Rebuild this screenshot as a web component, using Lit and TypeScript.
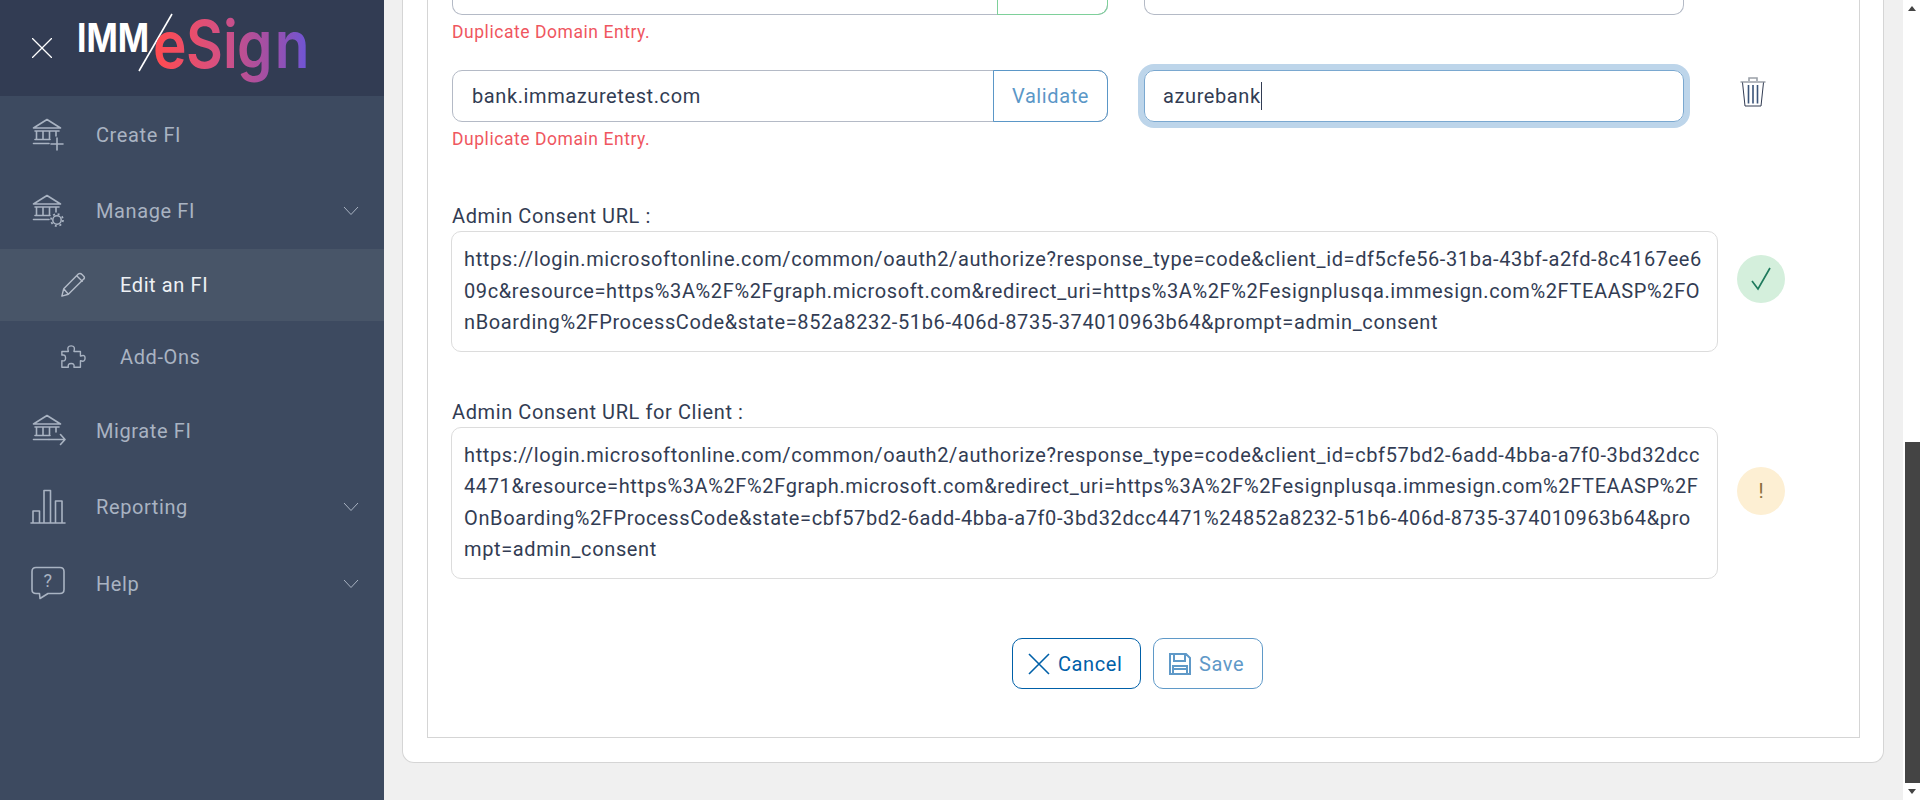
import { LitElement, html, css, svg } from "lit";
import { customElement } from "lit/decorators.js";

const bank = svg`<path d="M1.5 10 L15 1.5 L28.5 10 Z M3 13 H27 M4.5 13 V21.5 M11 13 V21.5 M17.5 13 V21.5 M24 13 V18 M3 21.5 H18 M1.5 25.5 H17" />`;

const I = {
  create: html`<svg class="ico" viewBox="0 0 34 34">${bank}<path d="M25 20 V32 M19 26 H31"/></svg>`,
  manage: html`<svg class="ico" viewBox="0 0 34 34">${bank}<circle cx="25" cy="26" r="6" stroke-width="1.7" stroke-dasharray="2 2.7" stroke-linecap="butt"/><circle cx="25" cy="26" r="4.2" stroke-width="1.5"/></svg>`,
  migrate: html`<svg class="ico" viewBox="0 0 34 34">${bank}<path d="M17 25.5 H33 M28.5 20.5 L33 25.5 L28.5 30.5"/></svg>`,
  report: html`<svg class="ico big" viewBox="0 0 36 36"><path d="M1 34 H35 M3 33.5 V22 H9.5 V33.5 M14 33.5 V1.5 H20.5 V33.5 M25.5 33.5 V12 H32 V33.5"/></svg>`,
  help: html`<svg class="ico big" viewBox="0 0 36 36"><path d="M6 1.5 H30 Q34 1.5 34 5.5 V23.5 Q34 27.5 30 27.5 H18 L10 32.5 L9.5 27.5 H6 Q2 27.5 2 23.5 V5.5 Q2 1.5 6 1.5 Z"/><text x="18" y="20.5" class="q">?</text></svg>`,
  pencil: html`<svg class="ico small" viewBox="0 0 28 28"><path d="M2 26 L4 18 L20 2 Q22 1 24 3 L26 5 Q27 7 25 8 L9 24 Z M4 18 L9 24 M18 4 L24 10"/></svg>`,
  puzzle: html`<svg class="ico small" viewBox="0 0 28 28"><path d="M2 8 H9 Q7 2 12 2 Q17 2 15 8 H22 V13 Q27 11 27 15 Q27 20 22 18 V25 H15 Q16 21 12 21 Q8 21 9 25 H2 V18 Q6 19 6 15 Q6 11 2 12 Z"/></svg>`,
};

const chev = html`<svg class="chev" viewBox="0 0 16 10"><path d="M1 1 L8 8.5 L15 1"/></svg>`;

@customElement("app-root")
export class AppRoot extends LitElement {
  static styles = css`
    :host { display: flex; width: 1920px; height: 800px; overflow: hidden; font-family: Roboto, "Liberation Sans", sans-serif; color: #323c53; background: #f0f0f0; }
    aside { width: 384px; flex: none; background: #3d4a60; display: flex; flex-direction: column; }
    .head { height: 96px; background: #323c53; display: flex; align-items: center; padding-left: 32px; box-sizing: border-box; }
    .head .x { width: 20px; height: 20px; stroke: #fff; stroke-width: 1.3; fill: none; flex: none; }
    .logo { width: 280px; height: 96px; margin-left: 25px; flex: none; }
    .imm { font: 700 40px Inter, sans-serif; fill: #fff; }
    .es { font: 600 66px Inter, sans-serif; }
    .item { display: flex; align-items: center; height: 76px; padding-left: 32px; color: #a9b3c2; font-size: 20px; letter-spacing: .6px; box-sizing: border-box; }
    .item .slot { width: 64px; flex: none; display: flex; align-items: center; }
    .item .label { flex: 1; }
    .ico { width: 34px; height: 34px; flex: none; stroke: #a9b3c2; stroke-width: 1.6; fill: none; stroke-linejoin: round; stroke-linecap: round; }
    .ico.small { width: 26px; height: 26px; stroke-width: 1.5; }
    .ico.big { width: 36px; height: 36px; margin-left: -2px; stroke-width: 1.6; }
    .q { font: 400 18px Roboto, sans-serif; fill: #a9b3c2; stroke: none; text-anchor: middle; }
    .sub { padding-left: 60px; height: 72px; }
    .sub .slot { width: 60px; }
    .active { background: #485568; color: #eef1f5; }
    .active .ico { stroke: #b4bcc9; }
    .chev { width: 16px; height: 10px; stroke: #a9b3c2; stroke-width: 1; fill: none; margin-right: 25px; flex: none; }
    .h77 { height: 77px; }
    .h78 { height: 78px; }

    main { flex: 1; min-width: 0; overflow: hidden; }
    .card { margin: -26px 19px 0 18px; height: 789px; background: #fff; border: 1px solid #d5d5d5; border-top: 0; border-radius: 0 0 12px 12px; padding: 0 23px 24px 24px; box-sizing: border-box; display: flex; }
    .box { flex: 1; border: 1px solid #d5d5d5; border-top: 0; padding: 0 0 0 24px; display: flex; flex-direction: column; min-width: 0; }
    .row { display: flex; flex: none; }
    .row.r1 { height: 40.5px; }
    .group { width: 656px; height: 52px; box-sizing: border-box; border: 1px solid #b4bac6; border-radius: 10px; display: flex; align-items: center; font-size: 20px; letter-spacing: .6px; padding-left: 19px; flex: none; }
    .group .val { flex: 1; }
    .group.clip, .plain.clip { height: 40.5px; border-top: 0; border-radius: 0 0 10px 10px; }
    .val-btn { width: 115px; height: 52px; margin: -1px -1px -1px 0; flex: none; box-sizing: border-box; border: 1px solid #5b97c7; border-radius: 0 10px 10px 0; color: #5b97c7; display: flex; align-items: center; justify-content: center; }
    .val-btn.ok { width: 111px; height: 40.5px; border-top: 0; border-color: #7ed09a; border-radius: 0 0 10px 0; margin: 0 -1px -1px 0; }
    .plain { width: 540px; height: 52px; margin-left: 36px; box-sizing: border-box; border: 1px solid #b4bac6; border-radius: 10px; flex: none; }
    .focus { border-color: #7aa8d0; box-shadow: 0 0 0 6px #bdd5ea; font-size: 20px; letter-spacing: .6px; display: flex; align-items: center; padding-left: 18px; }
    .caret { width: 1px; height: 28px; background: #323c53; }
    .err { color: #ef5660; font-size: 17.5px; letter-spacing: .55px; height: 31px; margin-top: 1.5px; display: flex; align-items: center; flex: none; }
    .r2 { margin-top: 23px; }
    .trash { width: 26px; height: 30px; margin: 7px 0 0 55.5px; fill: none; flex: none; }
    .trash .lid { stroke: #9aa0a8; stroke-width: 1.6; }
    .trash .body { stroke: #323c53; stroke-width: 1; }
    .trash .bars { stroke: #3b5478; stroke-width: 1.6; }
    .lab { font-size: 20px; letter-spacing: .6px; height: 27px; display: flex; align-items: center; margin: 47.5px 0 2px; flex: none; }
    .l2 { margin: 47px 0 1px; }
    .urlrow { display: flex; align-items: center; flex: none; margin-left: -1px; gap: 19px; }
    .url { width: 1267px; box-sizing: border-box; border: 1px solid #dcdcdc; border-radius: 10px; padding: 12px; font-size: 20px; letter-spacing: .62px; line-height: 31.5px; word-break: break-all; flex: none; }
    .circle { width: 48px; height: 48px; margin-bottom: 24px; border-radius: 50%; display: flex; align-items: center; justify-content: center; flex: none; font-size: 20px; }
    .good { background: #d4efdc; }
    .good svg { width: 20px; height: 24px; stroke: #1f7a5d; stroke-width: 1.7; fill: none; }
    .warn { background: #fdefd3; color: #8a6d3b; }
    .btns { display: flex; justify-content: center; gap: 12px; margin: 59.5px 0 0 -1px; width: 1373px; flex: none; }
    .btn { height: 51px; box-sizing: border-box; border-radius: 10px; display: flex; align-items: center; font-size: 20px; letter-spacing: .6px; padding-left: 15px; gap: 8px; }
    .btn svg { width: 22px; height: 22px; fill: none; stroke: currentColor; flex: none; }
    .cancel { width: 129px; border: 1px solid #0060a8; color: #0060a8; }
    .save { width: 110px; border: 1px solid #5f99c8; color: #5f99c8; }

    .sb { width: 17px; flex: none; background: #fff; display: flex; flex-direction: column; align-items: stretch; }
    .arrow { height: 17px; display: flex; align-items: center; justify-content: center; color: #444; flex: none; }
    .arrow.end { margin-top: auto; }
    .arrow svg { width: 8px; height: 5px; fill: #444; }
    .thumb { height: 341px; margin: 425px 0 0 2px; background: #444; flex: none; }
  `;

  render() {
    return html`
      <aside>
        <div class="head">
          <svg class="x" viewBox="0 0 20 20"><path d="M0 0 L20 20 M20 0 L0 20"/></svg>
          <svg class="logo" viewBox="0 0 280 96">
            <defs><linearGradient id="g" gradientUnits="userSpaceOnUse" x1="92" x2="267" y1="0" y2="0">
              <stop offset="0" stop-color="#ff4b50"/><stop offset=".4" stop-color="#d8507f"/><stop offset=".75" stop-color="#a04fa6"/><stop offset="1" stop-color="#6f55d4"/>
            </linearGradient></defs>
            <g transform="scale(.84 1)"><text class="imm" x="0" y="52">IMM</text></g>
            <path d="M95 14 L62 71" stroke="#fff" stroke-width="1.6"/>
            <g transform="scale(.86 1)"><text class="es" x="88.4 126.7 169.8 186 230" y="68" fill="url(#g)">eSign</text></g>
          </svg>
        </div>
        <div class="item h77"><span class="slot">${I.create}</span><span class="label">Create FI</span></div>
        <div class="item"><span class="slot">${I.manage}</span><span class="label">Manage FI</span>${chev}</div>
        <div class="item sub active"><span class="slot">${I.pencil}</span><span class="label">Edit an FI</span></div>
        <div class="item sub"><span class="slot">${I.puzzle}</span><span class="label">Add-Ons</span></div>
        <div class="item"><span class="slot">${I.migrate}</span><span class="label">Migrate FI</span></div>
        <div class="item"><span class="slot">${I.report}</span><span class="label">Reporting</span>${chev}</div>
        <div class="item h78"><span class="slot">${I.help}</span><span class="label">Help</span>${chev}</div>
      </aside>
      <main>
        <div class="card"><div class="box">
          <div class="row r1">
            <div class="group clip"><span class="val"></span><span class="val-btn ok"></span></div>
            <div class="plain clip"></div>
          </div>
          <div class="err">Duplicate Domain Entry.</div>
          <div class="row r2">
            <div class="group"><span class="val">bank.immazuretest.com</span><span class="val-btn">Validate</span></div>
            <div class="plain focus">azurebank<span class="caret"></span></div>
            <svg class="trash" viewBox="0 0 26 30"><path class="lid" d="M0.5 5 H25.5 M9 4 V1 H17 V4"/><path class="body" d="M2.5 5.5 L5 29 H21 L23.5 5.5"/><path class="bars" d="M8.5 8 V26.5 M13 8 V26.5 M17.5 8 V26.5"/></svg>
          </div>
          <div class="err">Duplicate Domain Entry.</div>
          <div class="lab">Admin Consent URL :</div>
          <div class="urlrow">
            <div class="url">https://login.microsoftonline.com/common/oauth2/authorize?response_type=code&client_id=df5cfe56-31ba-43bf-a2fd-8c4167ee609c&resource=https%3A%2F%2Fgraph.microsoft.com&redirect_uri=https%3A%2F%2Fesignplusqa.immesign.com%2FTEAASP%2FOnBoarding%2FProcessCode&state=852a8232-51b6-406d-8735-374010963b64&prompt=admin_consent</div>
            <div class="circle good"><svg viewBox="0 0 20 24"><path d="M1 14 L7 22 L19 1"/></svg></div>
          </div>
          <div class="lab l2">Admin Consent URL for Client :</div>
          <div class="urlrow">
            <div class="url">https://login.microsoftonline.com/common/oauth2/authorize?response_type=code&client_id=cbf57bd2-6add-4bba-a7f0-3bd32dcc4471&resource=https%3A%2F%2Fgraph.microsoft.com&redirect_uri=https%3A%2F%2Fesignplusqa.immesign.com%2FTEAASP%2FOnBoarding%2FProcessCode&state=cbf57bd2-6add-4bba-a7f0-3bd32dcc4471%24852a8232-51b6-406d-8735-374010963b64&prompt=admin_consent</div>
            <div class="circle warn">!</div>
          </div>
          <div class="btns">
            <div class="btn cancel"><svg viewBox="0 0 22 22" stroke-width="1.6"><path d="M1 1 L21 21 M21 1 L1 21"/></svg>Cancel</div>
            <div class="btn save"><svg viewBox="0 0 22 22" stroke-width="2"><path d="M1 1 H17 L21 5 V21 H1 Z M5 1 V8 H16 V1 M4 21 V13 H18 V21 M4 16 H18"/></svg>Save</div>
          </div>
        </div></div>
      </main>
      <div class="sb">
        <div class="arrow"><svg viewBox="0 0 8 5"><path d="M4 0 L8 5 H0 Z"/></svg></div>
        <div class="thumb"></div>
        <div class="arrow end"><svg viewBox="0 0 8 5"><path d="M0 0 H8 L4 5 Z"/></svg></div>
      </div>
    `;
  }
}
